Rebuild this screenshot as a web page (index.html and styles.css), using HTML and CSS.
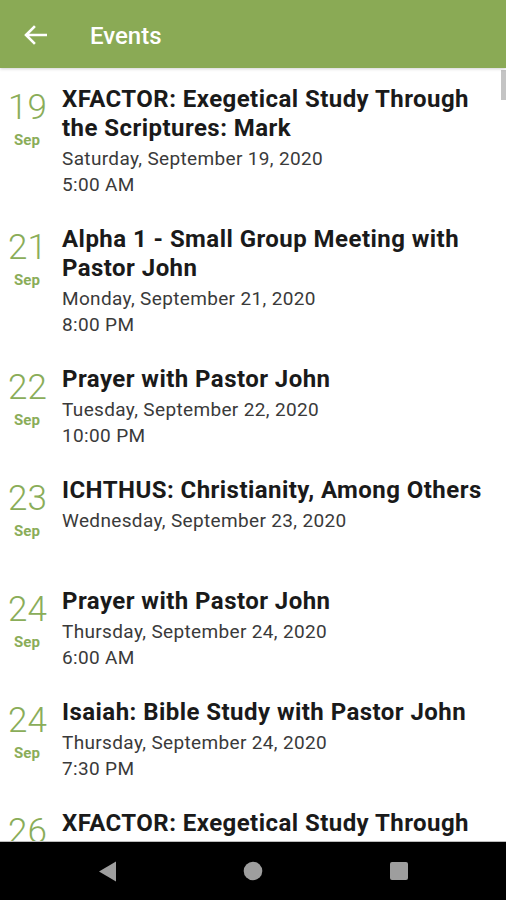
FILE: index.html
```html
<!DOCTYPE html>
<html lang="en">
<head>
<meta charset="UTF-8" />
<title>Events</title>
<meta name="viewport" content="width=device-width,initial-scale=1" />
<link rel="stylesheet" href="styles.css">
</head>
<body>
<div id="app">
  <div id="toolbar">
    <button id="back-btn" aria-label="Back">
      <svg width="24" height="20" viewBox="0 0 24 20"><path d="M23 10H3.5M11 2L3 10l8 8" fill="none" stroke="#fff" stroke-width="2.6" stroke-linecap="square"/></svg>
    </button>
    <span id="title">Events</span>
  </div>
  <div id="event-list">
    <div class="scrollbar"></div>
    <div class="event">
      <div class="event-date"><div class="day">19</div><div class="month">Sep</div></div>
      <div class="event-info">
        <div class="event-title">XFACTOR: Exegetical Study Through the Scriptures: Mark</div>
        <div class="event-when">Saturday, September 19, 2020</div>
        <div class="event-time">5:00 AM</div>
      </div>
    </div>
    <div class="event">
      <div class="event-date"><div class="day">21</div><div class="month">Sep</div></div>
      <div class="event-info">
        <div class="event-title">Alpha 1 - Small Group Meeting with Pastor John</div>
        <div class="event-when">Monday, September 21, 2020</div>
        <div class="event-time">8:00 PM</div>
      </div>
    </div>
    <div class="event">
      <div class="event-date"><div class="day">22</div><div class="month">Sep</div></div>
      <div class="event-info">
        <div class="event-title">Prayer with Pastor John</div>
        <div class="event-when">Tuesday, September 22, 2020</div>
        <div class="event-time">10:00 PM</div>
      </div>
    </div>
    <div class="event">
      <div class="event-date"><div class="day">23</div><div class="month">Sep</div></div>
      <div class="event-info">
        <div class="event-title">ICHTHUS: Christianity, Among Others</div>
        <div class="event-when">Wednesday, September 23, 2020</div>
        <div class="event-time"></div>
      </div>
    </div>
    <div class="event">
      <div class="event-date"><div class="day">24</div><div class="month">Sep</div></div>
      <div class="event-info">
        <div class="event-title">Prayer with Pastor John</div>
        <div class="event-when">Thursday, September 24, 2020</div>
        <div class="event-time">6:00 AM</div>
      </div>
    </div>
    <div class="event">
      <div class="event-date"><div class="day">24</div><div class="month">Sep</div></div>
      <div class="event-info">
        <div class="event-title">Isaiah: Bible Study with Pastor John</div>
        <div class="event-when">Thursday, September 24, 2020</div>
        <div class="event-time">7:30 PM</div>
      </div>
    </div>
    <div class="event">
      <div class="event-date"><div class="day">26</div><div class="month">Sep</div></div>
      <div class="event-info">
        <div class="event-title">XFACTOR: Exegetical Study Through the Scriptures: Mark</div>
        <div class="event-when">Saturday, September 26, 2020</div>
        <div class="event-time">5:00 AM</div>
      </div>
    </div>
  </div>
  <div id="nav-bar">
    <div class="nav-btn"><svg width="19" height="21" viewBox="0 0 19 21"><path d="M18 0.5 L18 20.5 L1 10.5 Z" fill="#9e9e9e"/></svg></div>
    <div class="nav-btn"><svg width="20" height="20" viewBox="0 0 20 20"><circle cx="10" cy="10" r="9.3" fill="#9e9e9e"/></svg></div>
    <div class="nav-btn"><svg width="20" height="20" viewBox="0 0 20 20"><rect x="1" y="1" width="18" height="18" rx="2" fill="#9e9e9e"/></svg></div>
  </div>
</div>
</body>
</html>
```

FILE: styles.css
```css
:root {
  --green: #8aaa55;
  --day-green: #8aad59;
  --text: #1a1a1a;
  --sub: #3a3a3a;
}
html, body {
  margin: 0;
  padding: 0;
  height: 100%;
  background: #fff;
  font-family: 'Roboto', 'Noto Sans', Arial, sans-serif;
}
#app {
  display: flex;
  flex-direction: column;
  height: 900px;
  overflow: hidden;
}
#toolbar {
  height: 68px;
  flex-shrink: 0;
  background: var(--green);
  display: flex;
  align-items: center;
  box-shadow: 0 1px 3px rgba(0,0,0,0.18);
  position: relative;
  z-index: 2;
}
#back-btn {
  background: none;
  border: none;
  padding: 0;
  margin-left: 23px;
  margin-top: 2px;
  width: 24px;
  height: 20px;
  display: flex;
  align-items: center;
  justify-content: center;
}
#title {
  color: #fff;
  font-size: 24px;
  font-weight: 500;
  margin-left: 43px;
  margin-top: 3px;
}
#event-list {
  flex: 1;
  overflow: hidden;
  padding-top: 3px;
  position: relative;
}
.scrollbar {
  position: absolute;
  right: 0;
  top: 2px;
  width: 5px;
  height: 30px;
  background: #c4c4c4;
}
.event {
  display: flex;
  padding: 14px 0 13px 0;
}
.event-date {
  width: 38px;
  margin-left: 8px;
  margin-right: 16px;
  text-align: center;
  color: var(--day-green);
}
.day {
  font-size: 35px;
  font-weight: 300;
  line-height: 36px;
  margin-top: 5px;
}
.month {
  font-size: 15px;
  font-weight: 700;
  line-height: 18px;
  margin-top: 5px;
}
.event-info {
  flex: 1;
  padding-right: 18px;
}
.event-title {
  font-size: 24px;
  font-weight: 700;
  line-height: 29px;
  letter-spacing: 0.45px;
  color: var(--text);
}
.event-when, .event-time {
  font-size: 19px;
  line-height: 26px;
  letter-spacing: 0.35px;
  color: var(--sub);
  min-height: 26px;
}
.event-when {
  margin-top: 3px;
}
#nav-bar {
  height: 58px;
  flex-shrink: 0;
  background: #000;
  border-top: 1px solid #bdbdbd;
  display: flex;
  align-items: center;
  justify-content: center;
}
.nav-btn {
  width: 146px;
  display: flex;
  justify-content: center;
  align-items: center;
}
```
